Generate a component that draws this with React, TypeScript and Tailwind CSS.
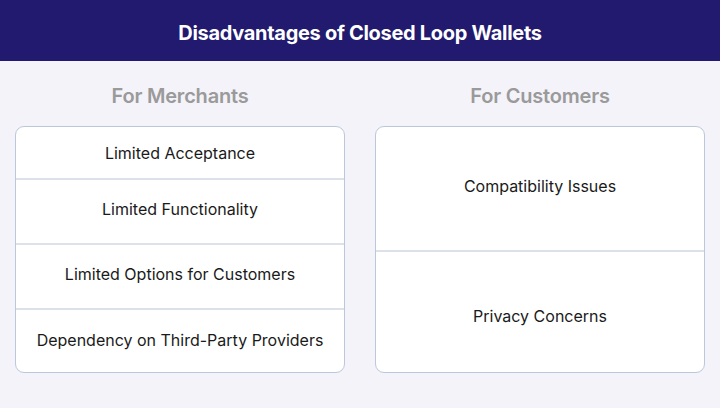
import React from "react";

const left = [
  { t: "Limited Acceptance", h: "h-[51px]" },
  { t: "Limited Functionality", h: "h-[65px] pb-[5px]" },
  { t: "Limited Options for Customers", h: "h-[65px] pb-[6px]" },
  { t: "Dependency on Third-Party Providers", h: "flex-1 pb-[3px]" },
];

const right = [
  { t: "Compatibility Issues", h: "h-[123px] pb-[5px]" },
  { t: "Privacy Concerns", h: "flex-1 pt-[7px]" },
];

function Column({ title, rows }: { title: string; rows: { t: string; h: string }[] }) {
  return (
    <div className="flex flex-col w-[330px]">
      <div className="h-[65px] pt-[4px] flex items-center justify-center text-[20px] font-semibold text-[#9a9a9a] tracking-[-0.2px]">
        {title}
      </div>
      <div className="h-[247px] flex flex-col bg-white border border-[#bac8da] rounded-[9px] overflow-hidden">
        {rows.map((r, i) => (
          <div
            key={r.t}
            className={`${r.h} flex items-center justify-center text-[16px] text-[#1a1a1a] ${
              i > 0 ? "border-t-2 border-[#dde2ea]" : ""
            }`}
          >
            {r.t}
          </div>
        ))}
      </div>
    </div>
  );
}

export default function App() {
  return (
    <div
      className="w-[720px] h-[408px] bg-[#f4f3f9] flex flex-col"
      style={{ fontFamily: "Inter, 'Noto Sans', sans-serif" }}
    >
      <div className="h-[61px] pt-[4px] bg-[#211a6e] flex items-center justify-center text-white text-[20px] font-bold tracking-[-0.3px]">
        Disadvantages of Closed Loop Wallets
      </div>
      <div className="flex justify-between px-[15px]">
        <Column title="For Merchants" rows={left} />
        <Column title="For Customers" rows={right} />
      </div>
    </div>
  );
}
